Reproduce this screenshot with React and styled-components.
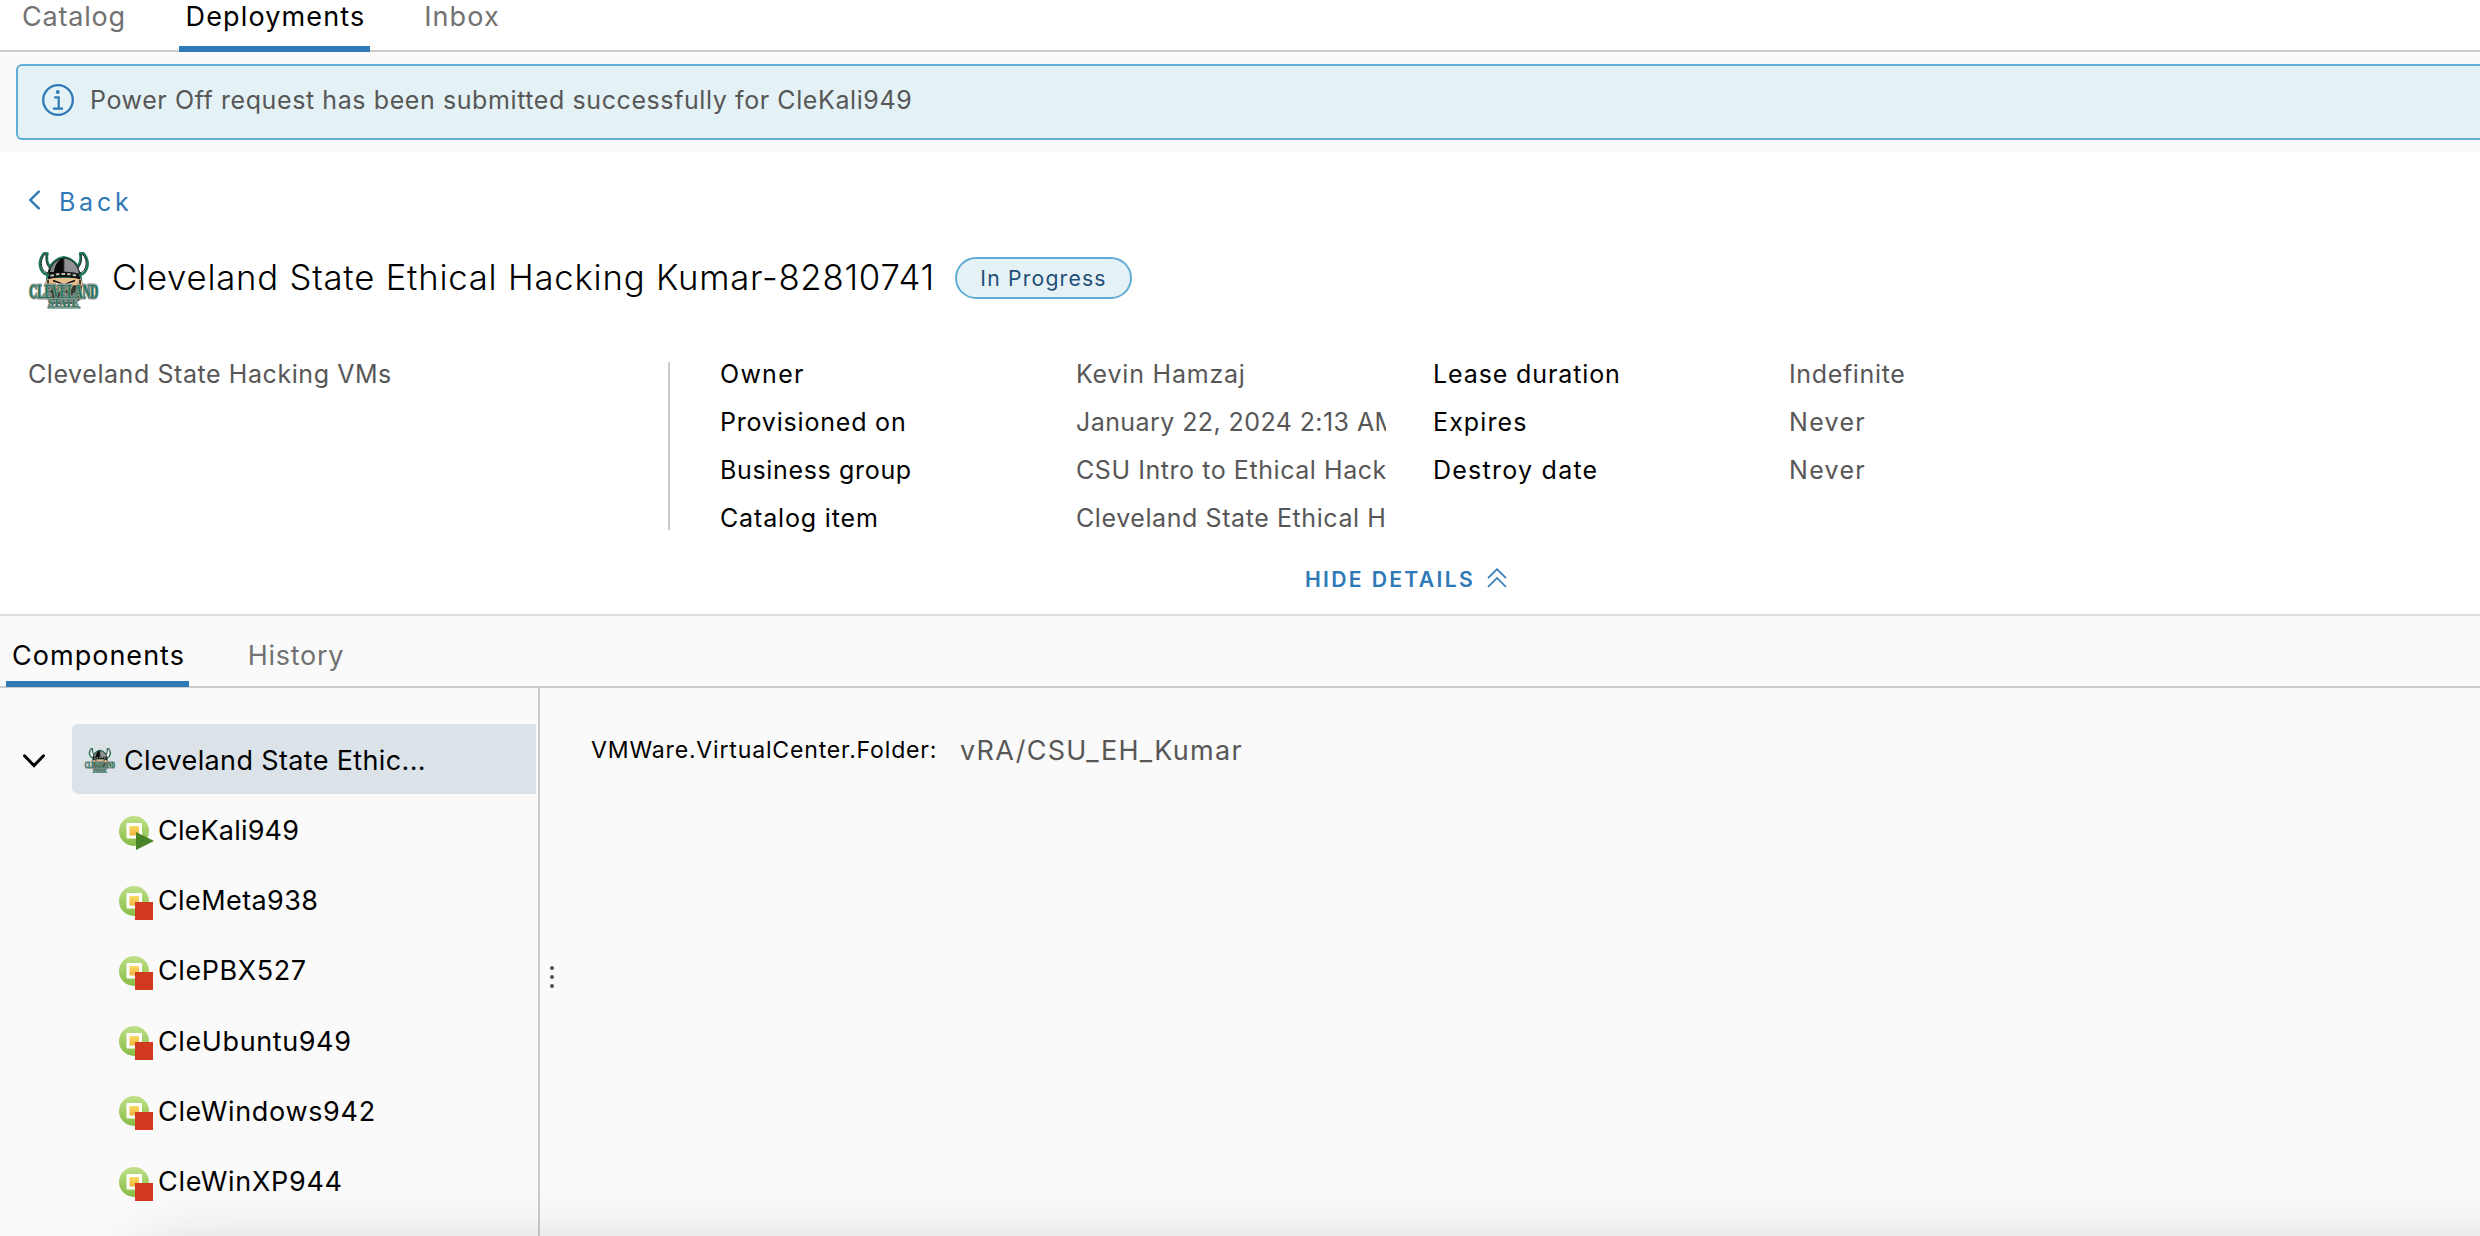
import React from 'react';
import styled, { createGlobalStyle } from 'styled-components';

const color = {
  text: '#000000',
  muted: '#575757',
  inactive: '#727272',
  action: '#3079b7',
  infoBorder: '#62add6',
  infoBg: '#e4f1f5',
  infoText: '#1f4f78',
  line: '#cccccc',
  surface: '#fafafa',
};

const GlobalStyle = createGlobalStyle`
  *, *::before, *::after { box-sizing: border-box; }
  html, body { margin: 0; height: 100%; }
  body {
    background: #ffffff;
    color: ${color.text};
    font-family: Inter, "Liberation Sans", sans-serif;
    font-kerning: normal;
    overflow: hidden;
  }
  svg { display: block; flex: none; }
`;

const Page = styled.div`
  position: relative;
  display: flex;
  flex-direction: column;
  height: 1236px;
  overflow: hidden;
`;

const Label = styled.span`
  letter-spacing: ${(p) => p.$track || 0}px;
  white-space: nowrap;
`;

/* Tab bars */
const TabBar = styled.nav`
  display: flex;
  flex: none;
  align-items: flex-end;
  height: ${(p) => p.$height}px;
  padding-left: ${(p) => p.$inset}px;
  box-shadow: inset 0 -2px 0 ${color.line};
  background: ${(p) => p.$background};
`;

const Tab = styled.a`
  display: flex;
  justify-content: center;
  width: ${(p) => p.$width}px;
  height: 52px;
  margin-right: ${(p) => p.$gap || 0}px;
  margin-bottom: ${(p) => p.$raise || 0}px;
  padding: ${(p) => p.$drop || 0}px 0 0 2px;
  border-bottom: 6px solid ${(p) => (p.$active ? color.action : 'transparent')};
  color: ${(p) => (p.$active ? color.text : color.inactive)};
  font-size: 27px;
  line-height: 32px;
`;

/* Notification */
const AlertStrip = styled.div`
  flex: none;
  height: 100px;
  padding: 12px 0 12px 16px;
  background: ${color.surface};
`;

const Alert = styled.div`
  display: flex;
  align-items: center;
  gap: 16px;
  height: 76px;
  padding: 0 0 4px 24px;
  border: 2px solid ${color.infoBorder};
  border-right: 0;
  border-radius: 6px 0 0 6px;
  background: ${color.infoBg};
  color: ${color.muted};
  font-size: 25px;
`;

/* Deployment summary */
const Summary = styled.section`
  display: flex;
  flex: none;
  flex-direction: column;
  height: 464px;
  padding-left: 28px;
  border-bottom: 2px solid #dddddd;
  background: #ffffff;
`;

const BackLink = styled.a`
  display: flex;
  align-items: center;
  gap: 19px;
  height: 60px;
  margin-top: 20px;
  color: ${color.action};
  font-size: 25px;

  svg { margin-top: -4px; }
`;

const TitleRow = styled.div`
  display: flex;
  align-items: center;
  height: 60px;
  margin-top: 18px;
`;

const Title = styled.h1`
  margin: -7px 0 0 12px;
  width: 843px;
  font-size: 34.7px;
  font-weight: 300;
  line-height: 44px;
`;

const Badge = styled.span`
  display: flex;
  align-items: center;
  justify-content: center;
  width: 177px;
  height: 42px;
  margin-top: -4px;
  border: 2px solid ${color.infoBorder};
  border-radius: 21px;
  background: ${color.infoBg};
  color: ${color.infoText};
  font-size: 21.2px;
`;

const Details = styled.div`
  display: flex;
  margin-top: 40px;
  font-size: 25px;
  line-height: 48px;
`;

const Description = styled.div`
  width: 640px;
  color: ${color.muted};
`;

const Facts = styled.div`
  display: flex;
  height: 168px;
  margin-top: 12px;
  padding-left: 50px;
  border-left: 2px solid ${color.line};
`;

const FactList = styled.dl`
  display: grid;
  grid-template-columns: 356px 310px;
  grid-auto-rows: 48px;
  align-content: start;
  margin: -12px 47px 0 0;
`;

const Term = styled.dt`
  letter-spacing: ${(p) => p.$track}px;
`;

const Value = styled.dd`
  margin: 0;
  overflow: hidden;
  color: ${color.muted};
  letter-spacing: ${(p) => p.$track}px;
  white-space: nowrap;
`;

const ToggleRow = styled.div`
  display: flex;
  align-items: center;
  gap: 12px;
  height: 40px;
  margin: 29px 0 0 1277px;
  color: ${color.action};
  font-size: 21.2px;
  font-weight: 600;

  svg { margin-top: -3px; }
`;

/* Component tree and detail pane */
const Body = styled.main`
  display: flex;
  flex: 1;
  min-height: 0;
  background: ${color.surface};
`;

const Tree = styled.aside`
  width: 540px;
  padding: 36px 2px 0 0;
  border-right: 2px solid ${color.line};
`;

const RootRow = styled.div`
  display: flex;
  align-items: center;
  height: 70px;
  padding-left: 22px;

  > svg { margin-top: 3px; }
`;

const RootNode = styled.div`
  display: flex;
  flex: 1;
  align-items: center;
  gap: 8px;
  height: 70px;
  margin-left: 26px;
  padding: 2px 0 0 12px;
  border-radius: 6px 0 0 6px;
  background: #dbe3e9;
  font-size: 27px;
`;

const Machines = styled.ul`
  margin: 0;
  padding: 1.5px 0 0 118px;
  list-style: none;
`;

const Machine = styled.li`
  display: flex;
  align-items: center;
  gap: 4px;
  height: 70.2px;
  font-size: 27px;

  svg { margin-top: 6px; }
`;

const Splitter = styled.div`
  display: flex;
  flex-direction: column;
  align-items: center;
  gap: 5px;
  width: 24px;
  padding-top: 278px;
`;

const Dot = styled.i`
  width: 4px;
  height: 4px;
  border-radius: 50%;
  background: #505050;
`;

const Properties = styled.div`
  display: flex;
  align-items: center;
  height: 40px;
  margin: 42px 0 0 27px;
`;

const PropertyName = styled.span`
  width: 369px;
  font-size: 23.1px;
  letter-spacing: 0.8px;
`;

const PropertyValue = styled.span`
  color: ${color.muted};
  font-size: 27px;
  letter-spacing: 1.29px;
`;

/* Soft shade rising from the lower edge, laid over the tree and pane */
const BottomShade = styled.div`
  position: absolute;
  top: 1248px;
  left: 130px;
  right: -200px;
  height: 200px;
  border-radius: 40px;
  box-shadow: 0 0 64px rgba(0, 0, 0, 0.16);
  pointer-events: none;
`;

function InfoIcon() {
  return (
    <svg width="32" height="32" viewBox="0 0 32 32" fill="none" stroke={color.action}>
      <circle cx="16" cy="16" r="14.8" strokeWidth="2.3" />
      <circle cx="15.8" cy="8" r="1.9" fill={color.action} stroke="none" />
      <path d="M12.2 13.3h4.5v11.2M11 24.6h10" strokeWidth="2.2" />
    </svg>
  );
}

function ChevronLeft() {
  return (
    <svg width="12" height="20" viewBox="0 0 12 20" fill="none" stroke={color.action} strokeWidth="2.4">
      <path d="M10.8 1.6L2.3 10l8.5 8.4" strokeLinecap="round" />
    </svg>
  );
}

function ChevronDown() {
  return (
    <svg width="24" height="16" viewBox="0 0 24 16" fill="none" stroke="#000000" strokeWidth="3">
      <path d="M2.5 2.8L12 12.6l9.5-9.8" strokeLinecap="round" />
    </svg>
  );
}

function DoubleChevronUp() {
  return (
    <svg width="20" height="20" viewBox="0 0 20 20" fill="none" stroke={color.action} strokeWidth="1.7">
      <path d="M1 10.2l9-9 9 9M1 19l9-9 9 9" />
    </svg>
  );
}

function VikingLogo({ width, height }) {
  return (
    <svg width={width} height={height} viewBox="0 0 72 57">
      <g strokeLinejoin="round">
        <path d="M16.5 1C12 5 10.500 12 13 17.500c1.500 3.500 4 5 7 5.500l3-7.500C19 12 18.500 6 19.500 1.500z" fill="#fff" stroke="#1c7556" strokeWidth="2.400" />
        <path d="M55 1c4.500 4 6 11 3.500 16.500-1.500 3.500-4 5-7 5.500l-3-7.500C52.500 12 53 6 52 1.500z" fill="#fff" stroke="#1c7556" strokeWidth="2.400" />
        <path d="M18 33l1.500-12C21 12 28 6 35.800 4.800 44 6 51 12 52.500 21L54 33z" fill="#1c7556" stroke="#1c7556" strokeWidth="1.500" />
        <path d="M16.600 2.500C13 7 12.500 12 14.500 16.500c1.200 2.600 3 4 5.300 4.500l1.700-4.800C18 12 17.600 7 18.300 2.800z" fill="#fff" stroke="#151515" strokeWidth="1" />
        <path d="M54.900 2.500c3.600 4.500 4.100 9.500 2.100 14-1.200 2.600-3 4-5.300 4.500L50 16.200c3.500-4.200 3.900-9.200 3.200-13.400z" fill="#fff" stroke="#151515" strokeWidth="1" />
        <path d="M17 32l2.500-6h33l2.500 6-5 14H22z" fill="#e9bd8c" />
        <path d="M20.500 22C22 12.500 28 7 35.800 5.800V22z" fill="#0b0b0b" />
        <path d="M35.800 5.800C44 7 50 12.500 51.500 22H35.800z" fill="#8f9194" stroke="#1b1b1b" strokeWidth="1" />
        <path d="M22 20c1-6.500 5-10.500 10-12.500C28 11 26.500 15 26 20z" fill="#85878a" />
        <path d="M19.500 27.500c1-3.500 2-5.500 3.500-6.200 8-2 18-2 26 0 1.500.7 2.500 2.700 3.500 6.200-9-3.500-24-3.500-33 0z" fill="#101010" />
        <path d="M22.500 24c8-2.800 19-2.800 27 0" fill="none" stroke="#b9babb" strokeWidth="2" strokeDasharray="3.600 2" />
        <path d="M25 28.500l8.500 3.200M47 28.500l-8.500 3.200M20 28v5M52 28v5" stroke="#15120f" strokeWidth="1.500" />
        <path d="M28 31.200l4 1.200M44 31.200l-4 1.200" stroke="#fff" strokeWidth="1.100" />
        <path d="M18 34c7-2 11 0 18 .5 7-.5 11-2.500 18-.5l-1 13-6 5H25l-6-5z" fill="#16221d" opacity="0.850" />
        <path d="M27 34l7 1.500-3 5zM45 34l-7 1.500 3 5z" fill="#d9ae7d" />
        <path d="M19.500 54.500h33v2h-33z" fill="#1c7556" />
      </g>
      <g
        fontFamily="Liberation Serif, serif"
        fontWeight="700"
        fill="#23765a"
        stroke="#8d9692"
        strokeWidth="1.600"
        paintOrder="stroke"
        strokeLinejoin="round"
      >
        <text transform="translate(20.200 54.500) scale(1 1.350)" fontSize="9.600">STATE</text>
        <text transform="translate(1.300 45.500) scale(1 1.800)" fontSize="11">CLEVELAND</text>
      </g>
    </svg>
  );
}

function MachineIcon({ running }) {
  return (
    <svg width="36" height="38" viewBox="0 0 36 38">
      <defs>
        <linearGradient id="vm-disc" x1="0" y1="0" x2="0" y2="1">
          <stop offset="0" stopColor="#c0e08a" />
          <stop offset="1" stopColor="#86bd45" />
        </linearGradient>
        <linearGradient id="vm-core" x1="0" y1="0" x2="0" y2="1">
          <stop offset="0" stopColor="#fbdc62" />
          <stop offset="1" stopColor="#efb03c" />
        </linearGradient>
      </defs>
      <circle cx="16" cy="16" r="15" fill="url(#vm-disc)" />
      <rect x="8.500" y="8" width="15.500" height="15.500" rx="1" fill="#ffffff" />
      <rect x="11.500" y="11" width="9.500" height="9.500" fill="url(#vm-core)" />
      {running ? (
        <path d="M18 17v18l18-9z" fill="#498325" />
      ) : (
        <rect x="17" y="17" width="18" height="18" fill="#d23a20" />
      )}
    </svg>
  );
}

const ownerFacts = [
  ['Owner', 1.26, 'Kevin Hamzaj', 0.79],
  ['Provisioned on', 0.8, 'January 22, 2024 2:13 AM', 0.42],
  ['Business group', 0.66, 'CSU Intro to Ethical Hacking', 0.56],
  ['Catalog item', 0.85, 'Cleveland State Ethical Hacking', 0.58],
];

const leaseFacts = [
  ['Lease duration', 0.88, 'Indefinite', 0.65],
  ['Expires', 1.1, 'Never', 1.3],
  ['Destroy date', 1.25, 'Never', 1.3],
];

const machines = [
  { name: 'CleKali949', track: 0.18, running: true },
  { name: 'CleMeta938', track: 0.4 },
  { name: 'ClePBX527', track: 0.58 },
  { name: 'CleUbuntu949', track: 0.6 },
  { name: 'CleWindows942', track: 0.68 },
  { name: 'CleWinXP944', track: 0.7 },
];

function FactTable({ facts }) {
  return (
    <FactList>
      {facts.map(([term, termTrack, value, valueTrack]) => (
        <React.Fragment key={term}>
          <Term $track={termTrack}>{term}</Term>
          <Value $track={valueTrack}>{value}</Value>
        </React.Fragment>
      ))}
    </FactList>
  );
}

export default function App() {
  return (
    <Page>
      <GlobalStyle />
      <TabBar $height={52} $inset={14} $background="#ffffff">
        <Tab $width={118} $gap={47} $drop={1}><Label $track={0.8}>Catalog</Label></Tab>
        <Tab $width={191} $gap={47} $drop={1} $active><Label $track={1.15}>Deployments</Label></Tab>
        <Tab $width={88} $drop={1}><Label $track={1.1}>Inbox</Label></Tab>
      </TabBar>

      <AlertStrip>
        <Alert>
          <InfoIcon />
          <Label $track={0.59}>Power Off request has been submitted successfully for CleKali949</Label>
        </Alert>
      </AlertStrip>

      <Summary>
        <BackLink>
          <ChevronLeft />
          <Label $track={3.76}>Back</Label>
        </BackLink>
        <TitleRow>
          <VikingLogo width={72} height={57} />
          <Title><Label $track={0.78}>Cleveland State Ethical Hacking Kumar-82810741</Label></Title>
          <Badge><Label $track={1.19}>In Progress</Label></Badge>
        </TitleRow>
        <Details>
          <Description><Label $track={0.57}>Cleveland State Hacking VMs</Label></Description>
          <Facts>
            <FactTable facts={ownerFacts} />
            <FactTable facts={leaseFacts} />
          </Facts>
        </Details>
        <ToggleRow>
          <Label $track={2.3}>HIDE DETAILS</Label>
          <DoubleChevronUp />
        </ToggleRow>
      </Summary>

      <TabBar $height={72} $inset={6} $background={color.surface}>
        <Tab $width={183} $gap={50} $raise={1} $drop={5} $active><Label $track={1.02}>Components</Label></Tab>
        <Tab $width={112} $raise={1} $drop={5}><Label $track={0.75}>History</Label></Tab>
      </TabBar>

      <Body>
        <Tree>
          <RootRow>
            <ChevronDown />
            <RootNode>
              <VikingLogo width={32} height={25} />
              <Label $track={0.36}>Cleveland State Ethic...</Label>
            </RootNode>
          </RootRow>
          <Machines>
            {machines.map((m) => (
              <Machine key={m.name}>
                <MachineIcon running={m.running} />
                <Label $track={m.track}>{m.name}</Label>
              </Machine>
            ))}
          </Machines>
        </Tree>
        <Splitter><Dot /><Dot /><Dot /></Splitter>
        <Properties>
          <PropertyName>VMWare.VirtualCenter.Folder:</PropertyName>
          <PropertyValue>vRA/CSU_EH_Kumar</PropertyValue>
        </Properties>
      </Body>
      <BottomShade />
    </Page>
  );
}
